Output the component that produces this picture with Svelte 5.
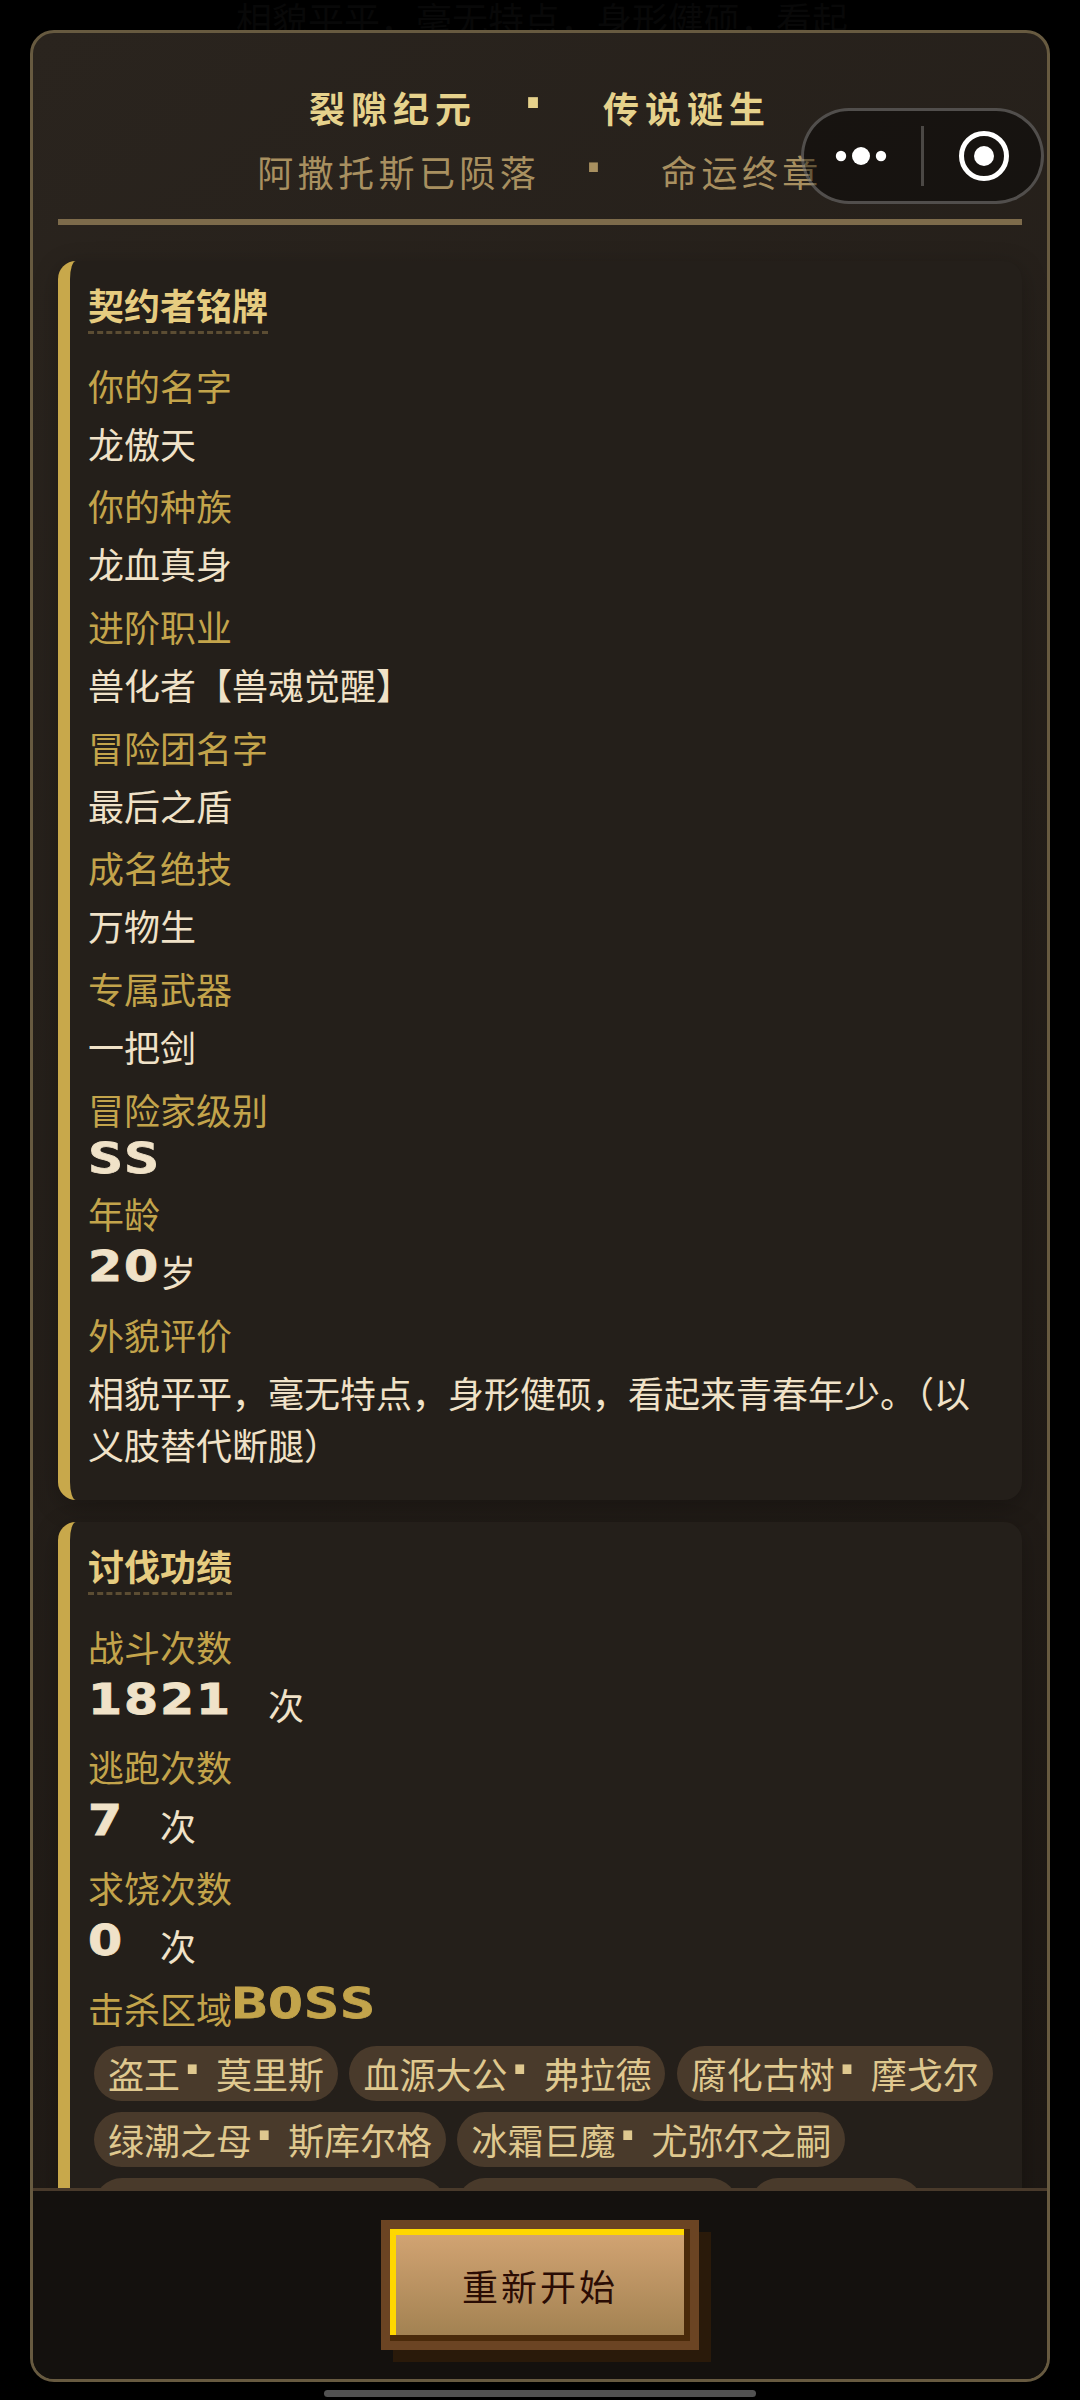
<script>
  const title = ['裂隙纪元', '传说诞生'];
  const subtitle = ['阿撒托斯已陨落', '命运终章'];

  const profile = [
    { label: '你的名字', value: '龙傲天' },
    { label: '你的种族', value: '龙血真身' },
    { label: '进阶职业', value: '兽化者【兽魂觉醒】' },
    { label: '冒险团名字', value: '最后之盾' },
    { label: '成名绝技', value: '万物生' },
    { label: '专属武器', value: '一把剑' },
    { label: '冒险家级别', pixel: 'SS' },
    { label: '年龄', pixel: '20', value: '岁' },
    { label: '外貌评价', value: '相貌平平，毫无特点，身形健硕，看起来青春年少。（以义肢替代断腿）' },
  ];

  const records = [
    { label: '战斗次数', pixel: '1821', value: '　次' },
    { label: '逃跑次数', pixel: '7', value: '　次' },
    { label: '求饶次数', pixel: '0', value: '　次' },
  ];

  const bosses = [
    ['盗王', '莫里斯'],
    ['血源大公', '弗拉德'],
    ['腐化古树', '摩戈尔'],
    ['绿潮之母', '斯库尔格'],
    ['冰霜巨魔', '尤弥尔之嗣'],
  ];

  // widths of the tags cut off by the footer
  const cutTags = [352, 281, 173];
</script>

{#snippet pixelText(text)}
  <span class="pixel">{#each text as ch}<b class:digit={/\d/.test(ch)}>{ch}</b>{/each}</span>
{/snippet}

{#snippet field(item)}
  <div class="field">
    <div class="label">{item.label}</div>
    <div class="value" class:short={!item.value}>
      {#if item.pixel}{@render pixelText(item.pixel)}{/if}{item.value ?? ''}
    </div>
  </div>
{/snippet}

<div class="screen">
  <div class="behind">相貌平平，毫无特点，身形健硕，看起</div>

  <div class="modal">
    <div class="content">
      <header>
        <h1>{title[0]}<span class="dot">·</span>{title[1]}</h1>
        <p>{subtitle[0]}<span class="dot">·</span>{subtitle[1]}</p>
      </header>

      <section class="card">
        <h2>契约者铭牌</h2>
        {#each profile as item (item.label)}
          {@render field(item)}
        {/each}
      </section>

      <section class="card">
        <h2>讨伐功绩</h2>
        {#each records as item (item.label)}
          {@render field(item)}
        {/each}
        <div class="label boss">击杀区域{@render pixelText('BOSS')}</div>
        <div class="tags">
          {#each bosses as [area, name] (name)}
            <span class="tag">{area}<span class="tag-dot">·</span>{name}</span>
          {/each}
          {#each cutTags as width}
            <span class="tag" style="width: {width}px"></span>
          {/each}
        </div>
      </section>
    </div>

    <footer>
      <button class="restart">重新开始</button>
    </footer>
  </div>

  <div class="capsule">
    <svg width="237" height="90" viewBox="0 0 237 90">
      <g fill="#fff">
        <circle cx="37" cy="45" r="5.2" />
        <circle cx="57" cy="45" r="9" />
        <circle cx="77" cy="45" r="5.2" />
        <circle cx="180" cy="45" r="10" />
      </g>
      <rect x="117" y="15" width="3" height="60" fill="#4b4845" />
      <circle cx="180" cy="45" r="22.5" fill="none" stroke="#fff" stroke-width="5" />
    </svg>
  </div>

  <div class="home-bar"></div>
</div>

<style>
  :global(body) {
    background: #000;
  }

  .screen {
    position: relative;
    box-sizing: border-box;
    width: 1080px;
    height: 2400px;
    padding: 30px 30px 18px;
    overflow: hidden;
    background: #000;
    font-family: 'Noto Sans CJK SC', sans-serif;
    font-size: 36px;
    line-height: 52.1px;
  }

  .behind {
    position: absolute;
    top: -8px;
    left: 236px;
    color: #080808;
    white-space: nowrap;
  }

  .modal {
    position: relative;
    box-sizing: border-box;
    display: flex;
    flex-direction: column;
    height: 2352px;
    border: 3px solid #675a40;
    border-radius: 24px;
    overflow: hidden;
    background: linear-gradient(145deg, #2a241e, #1c1713);
  }

  .content {
    flex: 1;
    min-height: 0;
    overflow: hidden;
    padding: 48px 25px 0;
  }

  header {
    box-sizing: border-box;
    height: 144px;
    border-bottom: 6px solid #7d6b4b;
    text-align: center;
    white-space: nowrap;
  }

  h1,
  p {
    margin: 0;
    height: 52px;
    font-size: 36px;
  }

  h1 {
    color: #e6d28c;
    font-weight: 700;
    letter-spacing: 6px;
  }

  p {
    margin-top: 12px;
    color: #a89060;
    font-weight: 400;
    letter-spacing: 4.4px;
  }

  .dot,
  .tag-dot {
    display: inline-block;
    font-family: 'DejaVu Sans Mono', monospace;
    font-weight: 700;
    letter-spacing: 0;
    text-align: center;
    line-height: 36px;
    height: 36px;
  }

  .dot {
    width: 126px;
    font-size: 60px;
    transform: translate(-7px, 1px);
  }

  p .dot {
    width: 121px;
    font-size: 54px;
    transform: translate(-7px, -1px);
  }

  .tag-dot {
    width: 27px;
    margin-right: 9px;
    font-size: 54px;
    text-indent: -3px;
    transform: translate(-1px, -1px);
  }

  .card {
    box-sizing: border-box;
    margin-top: 36px;
    padding: 17px 18px 19.4px;
    border-left: 12px solid #c8a84b;
    border-radius: 18px;
    background: #241f1a;
    box-shadow: 0 6px 24px rgba(0, 0, 0, 0.25);
  }

  .card + .card {
    margin-top: 22px;
    height: 900px;
  }

  h2 {
    width: fit-content;
    margin: 0 0 24.5px;
    padding-bottom: 1px;
    border-bottom: 3px dashed #5c4d33;
    color: #e6cc80;
    font-size: 36px;
    font-weight: 700;
  }

  .field {
    margin-bottom: 10.5px;
  }

  .label {
    color: #c3a44b;
  }

  .value {
    margin-top: 6px;
    color: #f0e2c8;
    line-break: loose;
  }

  .value.short {
    height: 36px;
    line-height: 36px;
  }

  .pixel {
    display: inline-flex;
    height: 36px;
    padding-top: 3px;
    vertical-align: top;
    font-family: 'DejaVu Sans Mono', monospace;
    font-size: 43px;
    line-height: 36px;
  }

  .short .pixel {
    padding-top: 0;
    margin-top: -1px;
  }

  .pixel b {
    width: 36px;
    transform: scaleX(1.35);
    transform-origin: 0 0;
    -webkit-text-stroke: 0.8px currentColor;
  }

  .pixel .digit {
    font-family: 'DejaVu Sans', sans-serif;
    transform: scaleX(1.14);
  }

  .boss {
    height: 52.1px;
  }

  .tags {
    display: flex;
    flex-wrap: wrap;
    gap: 11px 11.4px;
    margin: 11.6px -6px 0 6px;
  }

  .tag {
    box-sizing: border-box;
    height: 55.4px;
    padding: 1px 14px 0;
    border-radius: 28px;
    background: #493a2b;
    color: #dfc88f;
    white-space: nowrap;
  }

  footer {
    box-sizing: border-box;
    display: flex;
    justify-content: center;
    height: 191px;
    padding-top: 29px;
    border-top: 3px solid #493a2b;
    background: #14110e;
  }

  .restart {
    box-sizing: border-box;
    width: 318px;
    height: 130px;
    padding: 0;
    border: 9px solid #6b4423;
    background: linear-gradient(#d4a574, #a08050);
    box-shadow:
      inset -6px -6px 0 #4a2a0a,
      inset 6px 6px 0 #ffd700,
      12px 12px 0 #2a1a0a;
    color: #2a0c04;
    font-family: inherit;
    font-size: 36px;
    letter-spacing: 3px;
  }

  .capsule {
    position: absolute;
    top: 108px;
    left: 801px;
    box-sizing: border-box;
    width: 243px;
    height: 96px;
    border: 3px solid rgba(255, 255, 255, 0.25);
    border-radius: 48px;
    background: rgba(0, 0, 0, 0.4);
  }

  .capsule svg {
    display: block;
  }

  .home-bar {
    position: absolute;
    left: 324px;
    bottom: 3px;
    width: 432px;
    height: 7px;
    border-radius: 4px;
    background: #525252;
  }
</style>
